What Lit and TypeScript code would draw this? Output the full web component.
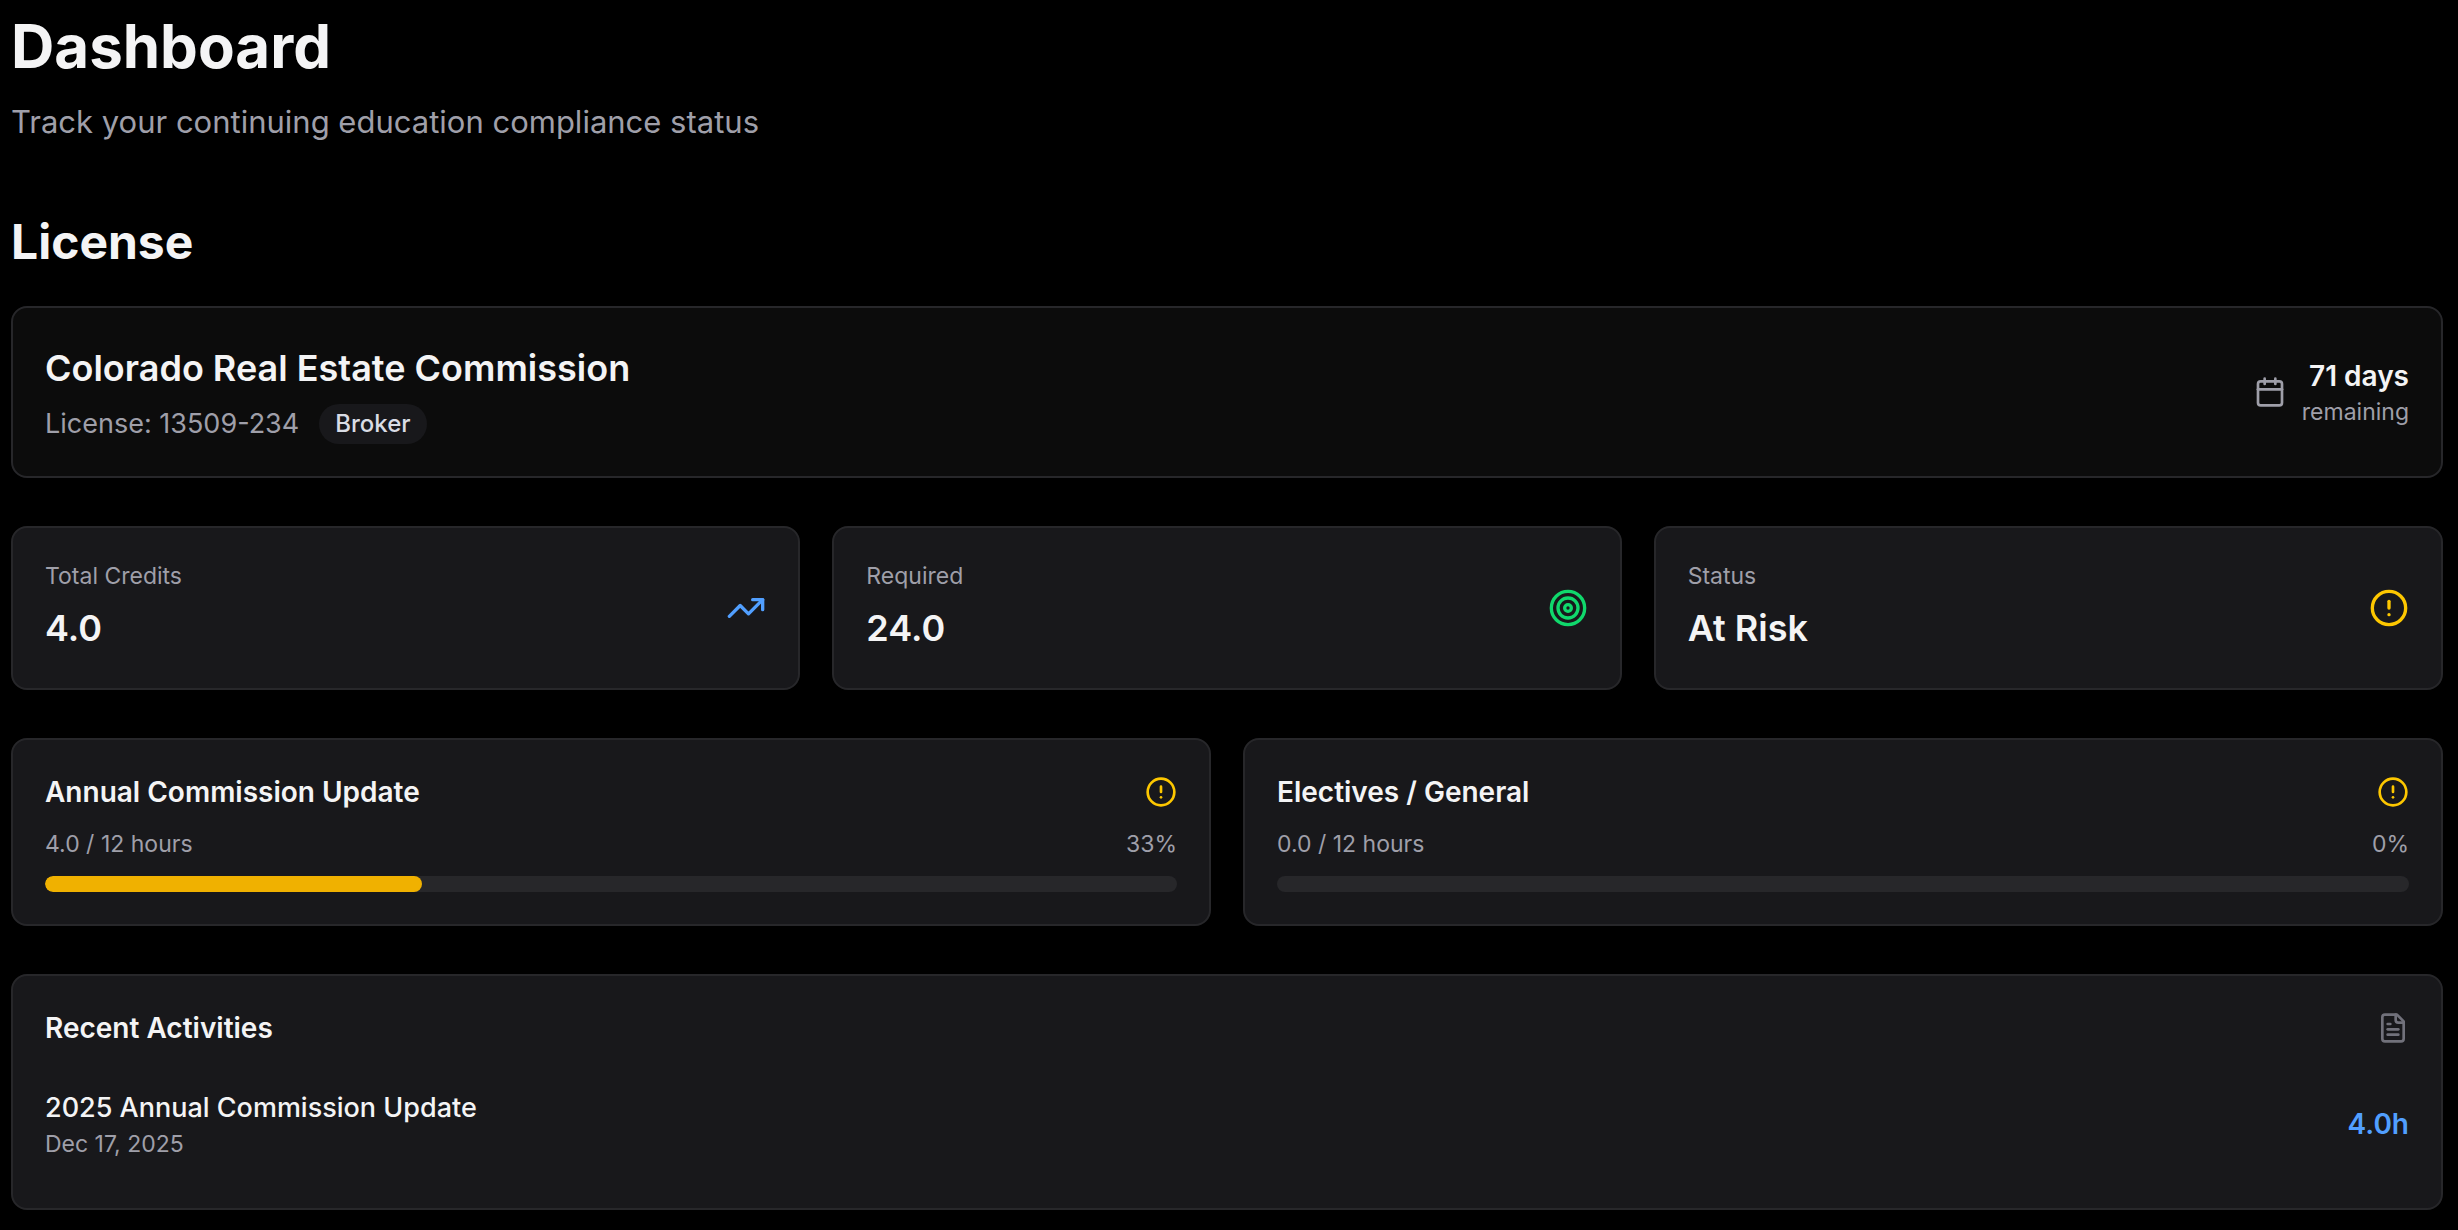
import { LitElement, html, css, svg, type TemplateResult } from "lit";
import { customElement, property } from "lit/decorators.js";

type IconName = "calendar" | "trending-up" | "target" | "alert" | "file";

const ICONS: Record<IconName, TemplateResult> = {
  calendar: svg`<path d="M8 2v4" /><path d="M16 2v4" /><rect width="18" height="18" x="3" y="4" rx="2" /><path d="M3 10h18" />`,
  "trending-up": svg`<path d="M16 7h6v6" /><path d="m22 7-8.5 8.5-5-5L2 17" />`,
  target: svg`<circle cx="12" cy="12" r="10" /><circle cx="12" cy="12" r="6" /><circle cx="12" cy="12" r="2" />`,
  alert: svg`<circle cx="12" cy="12" r="10" /><path d="M12 8v4" /><path d="M12 16h.01" />`,
  file: svg`<path d="M15 2H6a2 2 0 0 0-2 2v16a2 2 0 0 0 2 2h12a2 2 0 0 0 2-2V7Z" /><path d="M14 2v4a2 2 0 0 0 2 2h4" /><path d="M10 9H8" /><path d="M16 13H8" /><path d="M16 17H8" />`,
};

@customElement("ui-icon")
export class UiIcon extends LitElement {
  @property() name: IconName = "alert";

  static styles = css`
    :host {
      display: block;
      flex: none;
      width: 32px;
      height: 32px;
    }
    .glyph {
      display: block;
      width: 100%;
      height: 100%;
      fill: none;
      stroke: currentColor;
      stroke-width: 2;
      stroke-linecap: round;
      stroke-linejoin: round;
    }
  `;

  render() {
    return html`<svg class="glyph" viewBox="0 0 24 24" aria-hidden="true">${ICONS[this.name]}</svg>`;
  }
}

interface Stat {
  label: string;
  value: string;
  icon: IconName;
  tone: string;
}

interface Requirement {
  title: string;
  earned: number;
  required: number;
}

interface Activity {
  title: string;
  date: string;
  hours: string;
}

const STATS: Stat[] = [
  { label: "Total Credits", value: "4.0", icon: "trending-up", tone: "blue" },
  { label: "Required", value: "24.0", icon: "target", tone: "green" },
  { label: "Status", value: "At Risk", icon: "alert", tone: "yellow" },
];

const REQUIREMENTS: Requirement[] = [
  { title: "Annual Commission Update", earned: 4, required: 12 },
  { title: "Electives / General", earned: 0, required: 12 },
];

const ACTIVITIES: Activity[] = [
  { title: "2025 Annual Commission Update", date: "Dec 17, 2025", hours: "4.0h" },
];

@customElement("app-root")
export class AppRoot extends LitElement {
  static styles = css`
    :host {
      display: block;
      box-sizing: border-box;
      min-height: 100vh;
      padding: 10px 15px 20px 11px;
      background: #000;
      color: #f4f4f5;
      font-family: Inter, "Liberation Sans", sans-serif;
    }
    h1,
    h2,
    h3,
    p,
    ul {
      margin: 0;
      padding: 0;
    }
    .page {
      display: flex;
      flex-direction: column;
      gap: 64px;
    }
    .intro {
      display: flex;
      flex-direction: column;
      gap: 16px;
    }
    .page-title {
      font-size: 60px;
      line-height: 72px;
      font-weight: 700;
    }
    .subtitle {
      font-size: 31px;
      line-height: 48px;
      color: #9f9fa9;
    }
    .license {
      display: flex;
      flex-direction: column;
      gap: 48px;
    }
    .lead {
      display: flex;
      flex-direction: column;
      gap: 32px;
    }
    .section-title {
      font-size: 48px;
      line-height: 64px;
      font-weight: 700;
    }
    .card {
      box-sizing: border-box;
      min-width: 0;
      padding: 32px;
      border: 2px solid #27272a;
      border-radius: 16px;
      background: #18181b;
    }
    .card.dim {
      background: #0c0c0c;
    }
    .row {
      display: flex;
      align-items: center;
      justify-content: space-between;
    }
    .stack {
      display: flex;
      flex-direction: column;
      gap: 8px;
    }
    .big {
      font-size: 36px;
      line-height: 56px;
      font-weight: 600;
    }
    .meta {
      display: flex;
      align-items: center;
      gap: 20px;
      color: #9f9fa9;
      font-size: 27px;
      line-height: 40px;
    }
    .badge {
      padding: 4px 16px;
      border-radius: 20px;
      background: #18181b;
      color: #d9dce4;
      font-size: 24px;
      line-height: 32px;
      font-weight: 500;
    }
    .deadline {
      display: flex;
      align-items: center;
      gap: 16px;
      color: #9f9fa9;
      text-align: right;
    }
    .small {
      font-size: 23px;
      line-height: 32px;
      color: #9f9fa9;
    }
    .strong {
      font-size: 28px;
      line-height: 40px;
      font-weight: 600;
    }
    .bright {
      color: #f4f4f5;
    }
    .medium {
      font-size: 27px;
      line-height: 40px;
      font-weight: 500;
    }
    .grid {
      display: grid;
      gap: 32px;
    }
    .three {
      grid-template-columns: repeat(3, minmax(0, 1fr));
    }
    .two {
      grid-template-columns: repeat(2, minmax(0, 1fr));
    }
    .large {
      width: 40px;
      height: 40px;
    }
    .blue {
      color: #519fff;
    }
    .green {
      color: #10d86c;
    }
    .yellow {
      color: #fdc700;
    }
    .grey {
      color: #71717b;
    }
    .requirement {
      display: flex;
      flex-direction: column;
      gap: 16px;
    }
    .track {
      height: 16px;
      border-radius: 8px;
      background: #27272a;
      overflow: hidden;
    }
    .fill {
      height: 100%;
      border-radius: 8px;
      background: #f0b100;
    }
    .recent {
      display: flex;
      flex-direction: column;
      gap: 24px;
    }
    .activities {
      list-style: none;
    }
    .activity {
      padding: 16px 0;
    }
  `;

  private renderStat(stat: Stat) {
    return html`
      <div class="card row">
        <div class="stack">
          <p class="small">${stat.label}</p>
          <p class="big">${stat.value}</p>
        </div>
        <ui-icon class="large ${stat.tone}" name=${stat.icon}></ui-icon>
      </div>
    `;
  }

  private renderRequirement(item: Requirement) {
    const share = (item.earned / item.required) * 100;
    return html`
      <div class="card requirement">
        <div class="row">
          <h3 class="strong">${item.title}</h3>
          <ui-icon class="yellow" name="alert"></ui-icon>
        </div>
        <div class="row small">
          <span>${item.earned.toFixed(1)} / ${item.required} hours</span>
          <span>${Math.round(share)}%</span>
        </div>
        <div
          class="track"
          role="progressbar"
          aria-label=${item.title}
          aria-valuemin="0"
          aria-valuemax="100"
          aria-valuenow=${Math.round(share)}
        >
          <div class="fill" style="width: ${share}%"></div>
        </div>
      </div>
    `;
  }

  private renderActivity(item: Activity) {
    return html`
      <li class="activity row">
        <div>
          <p class="medium">${item.title}</p>
          <p class="small">${item.date}</p>
        </div>
        <span class="strong blue">${item.hours}</span>
      </li>
    `;
  }

  render() {
    return html`
      <main class="page">
        <header class="intro">
          <h1 class="page-title">Dashboard</h1>
          <p class="subtitle">Track your continuing education compliance status</p>
        </header>
        <section class="license">
          <div class="lead">
            <h2 class="section-title">License</h2>
            <div class="card dim row">
              <div class="stack">
                <h3 class="big">Colorado Real Estate Commission</h3>
                <div class="meta">
                  <span>License: 13509-234</span>
                  <span class="badge">Broker</span>
                </div>
              </div>
              <div class="deadline">
                <ui-icon name="calendar"></ui-icon>
                <div>
                  <p class="strong bright">71 days</p>
                  <p class="small">remaining</p>
                </div>
              </div>
            </div>
          </div>
          <div class="grid three">${STATS.map((s) => this.renderStat(s))}</div>
          <div class="grid two">${REQUIREMENTS.map((r) => this.renderRequirement(r))}</div>
          <div class="card recent">
            <div class="row">
              <h3 class="strong">Recent Activities</h3>
              <ui-icon class="grey" name="file"></ui-icon>
            </div>
            <ul class="activities">
              ${ACTIVITIES.map((a) => this.renderActivity(a))}
            </ul>
          </div>
        </section>
      </main>
    `;
  }
}
